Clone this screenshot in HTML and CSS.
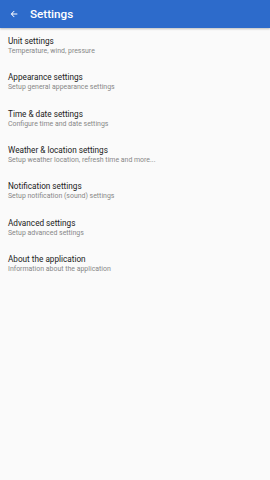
FILE: index.html
```html
<!DOCTYPE html>
<html lang="en">
    <head>
        <meta charset="UTF-8" />
        <meta name="viewport" content="width=device-width, initial-scale=1.0" />
        <title>Settings</title>
        <link rel="stylesheet" href="styles.css">
    </head>
    <body>
        <div class="bar">
            <svg class="back" width="10" height="10" viewBox="0 0 24 24">
                <path d="M20 11H7.83l5.59-5.59L12 4l-8 8 8 8 1.41-1.41L7.83 13H20v-2z" fill="#fff"/>
            </svg>
            <span class="title">Settings</span>
        </div>
        <div class="list">
            <div class="item">
                <div class="name">Unit settings</div>
                <div class="desc">Temperature, wind, pressure</div>
            </div>
            <div class="item">
                <div class="name">Appearance settings</div>
                <div class="desc">Setup general appearance settings</div>
            </div>
            <div class="item">
                <div class="name">Time &amp; date settings</div>
                <div class="desc">Configure time and date settings</div>
            </div>
            <div class="item">
                <div class="name">Weather &amp; location settings</div>
                <div class="desc">Setup weather location, refresh time and more...</div>
            </div>
            <div class="item">
                <div class="name">Notification settings</div>
                <div class="desc">Setup notification (sound) settings</div>
            </div>
            <div class="item">
                <div class="name">Advanced settings</div>
                <div class="desc">Setup advanced settings</div>
            </div>
            <div class="item">
                <div class="name">About the application</div>
                <div class="desc">Information about the application</div>
            </div>
        </div>
    </body>
</html>
```

FILE: styles.css
```css
* {
    margin: 0px;
    padding: 0px;
}
body {
    width: 270px;
    height: 480px;
    background-color: #fafafa;
    font-family: Roboto, "Noto Sans", sans-serif;
}
.bar {
    height: 28px;
    background-color: #2d6bcb;
    display: flex;
    align-items: center;
    box-shadow: 0 1px 2px rgba(0, 0, 0, 0.25);
}
.back {
    margin-left: 9px;
    margin-right: 11px;
}
.title {
    color: #fff;
    font-size: 11.7px;
    font-weight: 500;
}
.item {
    padding: 8px 8px 8.33px 8px;
}
.name {
    font-size: 8.2px;
    line-height: 11px;
    color: #212121;
}
.desc {
    font-size: 6.95px;
    line-height: 9px;
    color: #878787;
}
```
